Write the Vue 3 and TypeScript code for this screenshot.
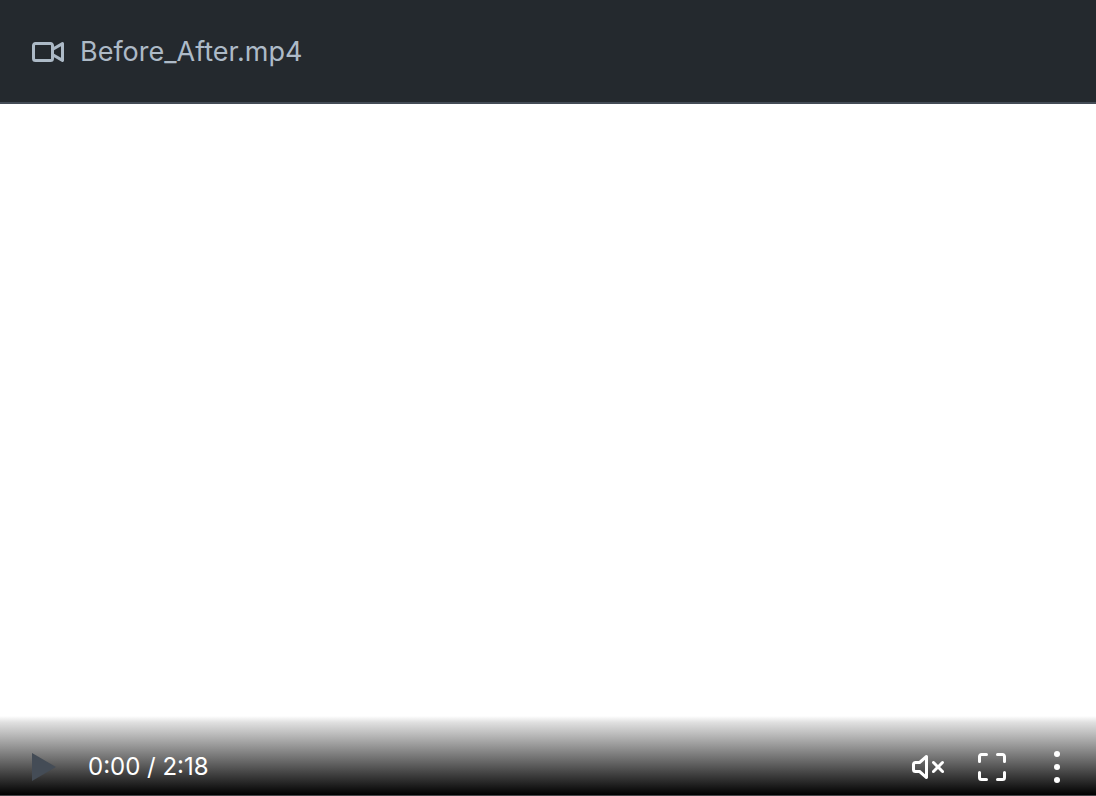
<script setup lang="ts">
import { computed, ref } from 'vue'

const fileName = 'Before_After.mp4'
const duration = 138
const position = ref(0)
const muted = ref(true)

function formatTime(seconds: number): string {
  return `${Math.floor(seconds / 60)}:${String(seconds % 60).padStart(2, '0')}`
}

const timeLabel = computed(() => `${formatTime(position.value)} / ${formatTime(duration)}`)
</script>

<template>
  <section class="attachment">
    <header class="file-header">
      <svg class="icon" viewBox="0 0 16 16" aria-hidden="true">
        <path d="M16 3.75v8.5a.75.75 0 0 1-1.136.643L11 10.575v.675A1.75 1.75 0 0 1 9.25 13h-7.5A1.75 1.75 0 0 1 0 11.25v-6.5C0 3.784.784 3 1.75 3h7.5c.966 0 1.75.784 1.75 1.75v.675l3.864-2.318A.75.75 0 0 1 16 3.75Zm-6.5 1a.25.25 0 0 0-.25-.25h-7.5a.25.25 0 0 0-.25.25v6.5c0 .138.112.25.25.25h7.5a.25.25 0 0 0 .25-.25v-6.5ZM11 8.825l3.5 2.1v-5.85l-3.5 2.1Z" />
      </svg>
      <span class="file-name">{{ fileName }}</span>
    </header>

    <div class="player">
      <div class="controls">
        <button class="control play" type="button" aria-label="Play">
          <svg class="icon" viewBox="0 0 32 32" aria-hidden="true">
            <path d="M0 2 24 16 0 30Z" />
          </svg>
        </button>
        <span class="time">{{ timeLabel }}</span>
        <div class="actions">
          <button class="control" type="button" aria-label="Mute" :aria-pressed="muted" @click="muted = !muted">
            <svg class="icon" viewBox="0 0 16 16" aria-hidden="true">
              <path d="M8 2.75v10.5a.751.751 0 0 1-1.238.57L3.472 11H1.75A1.75 1.75 0 0 1 0 9.25v-2.5C0 5.784.784 5 1.75 5h1.722l3.29-2.82A.75.75 0 0 1 8 2.75Zm3.28 2.47L13 6.94l1.72-1.72a.751.751 0 0 1 1.042.018.751.751 0 0 1 .018 1.042L14.06 8l1.72 1.72a.749.749 0 0 1-.326 1.275.749.749 0 0 1-.734-.215L13 9.06l-1.72 1.72a.749.749 0 0 1-1.275-.326.749.749 0 0 1 .215-.734L11.94 8l-1.72-1.72a.749.749 0 0 1 .326-1.275.749.749 0 0 1 .734.215Zm-7.042 1.1a.752.752 0 0 1-.488.18h-2a.25.25 0 0 0-.25.25v2.5c0 .138.112.25.25.25h2c.179 0 .352.064.488.18l2.262 1.94V4.38Z" />
            </svg>
          </button>
          <button class="control" type="button" aria-label="Full screen">
            <svg class="icon" viewBox="0 0 16 16" aria-hidden="true">
              <path d="M1.75 10a.75.75 0 0 1 .75.75v2.5c0 .138.112.25.25.25h2.5a.75.75 0 0 1 0 1.5h-2.5A1.75 1.75 0 0 1 1 13.25v-2.5a.75.75 0 0 1 .75-.75Zm12.5 0a.75.75 0 0 1 .75.75v2.5A1.75 1.75 0 0 1 13.25 15h-2.5a.75.75 0 0 1 0-1.5h2.5a.25.25 0 0 0 .25-.25v-2.5a.75.75 0 0 1 .75-.75ZM2.75 2.5a.25.25 0 0 0-.25.25v2.5a.75.75 0 0 1-1.5 0v-2.5C1 1.784 1.784 1 2.75 1h2.5a.75.75 0 0 1 0 1.5ZM10 1.75a.75.75 0 0 1 .75-.75h2.5c.966 0 1.75.784 1.75 1.75v2.5a.75.75 0 0 1-1.5 0v-2.5a.25.25 0 0 0-.25-.25h-2.5a.75.75 0 0 1-.75-.75Z" />
            </svg>
          </button>
          <button class="control" type="button" aria-label="More options">
            <svg class="icon" viewBox="0 0 32 32" aria-hidden="true">
              <circle cx="17" cy="3" r="3" />
              <circle cx="17" cy="16" r="3" />
              <circle cx="17" cy="29" r="3" />
            </svg>
          </button>
        </div>
      </div>
    </div>
  </section>
</template>

<style>
body {
  margin: 0;
}
</style>

<style scoped>
.attachment {
  display: flex;
  flex-direction: column;
  box-sizing: border-box;
  min-height: 100vh;
  border-bottom: 1px solid #444447;
  font-family: Inter, "Liberation Sans", sans-serif;
}

.file-header {
  display: flex;
  align-items: center;
  gap: 16px;
  padding: 32px 32px 30px;
  border-bottom: 2px solid #444c56;
  background: #24292e;
  color: #adbac7;
}

.file-name {
  font-size: 27px;
  line-height: 40px;
}

.icon {
  display: block;
  flex: none;
  width: 32px;
  height: 32px;
  fill: currentColor;
}

.player {
  display: flex;
  flex: 1;
  flex-direction: column;
  justify-content: flex-end;
  background: #fff;
}

.controls {
  display: flex;
  align-items: center;
  gap: 24px;
  padding: 35px 24px 12px 32px;
  background: linear-gradient(to bottom, #fff, #e0e0e0 8%, #000);
  color: #fff;
}

.control {
  padding: 0;
  border: 0;
  background: none;
  color: inherit;
  cursor: pointer;
}

.play {
  color: #444c56;
}

.time {
  font-size: 24px;
  line-height: 32px;
}

.actions {
  display: flex;
  gap: 32px;
  margin-left: auto;
}
</style>
